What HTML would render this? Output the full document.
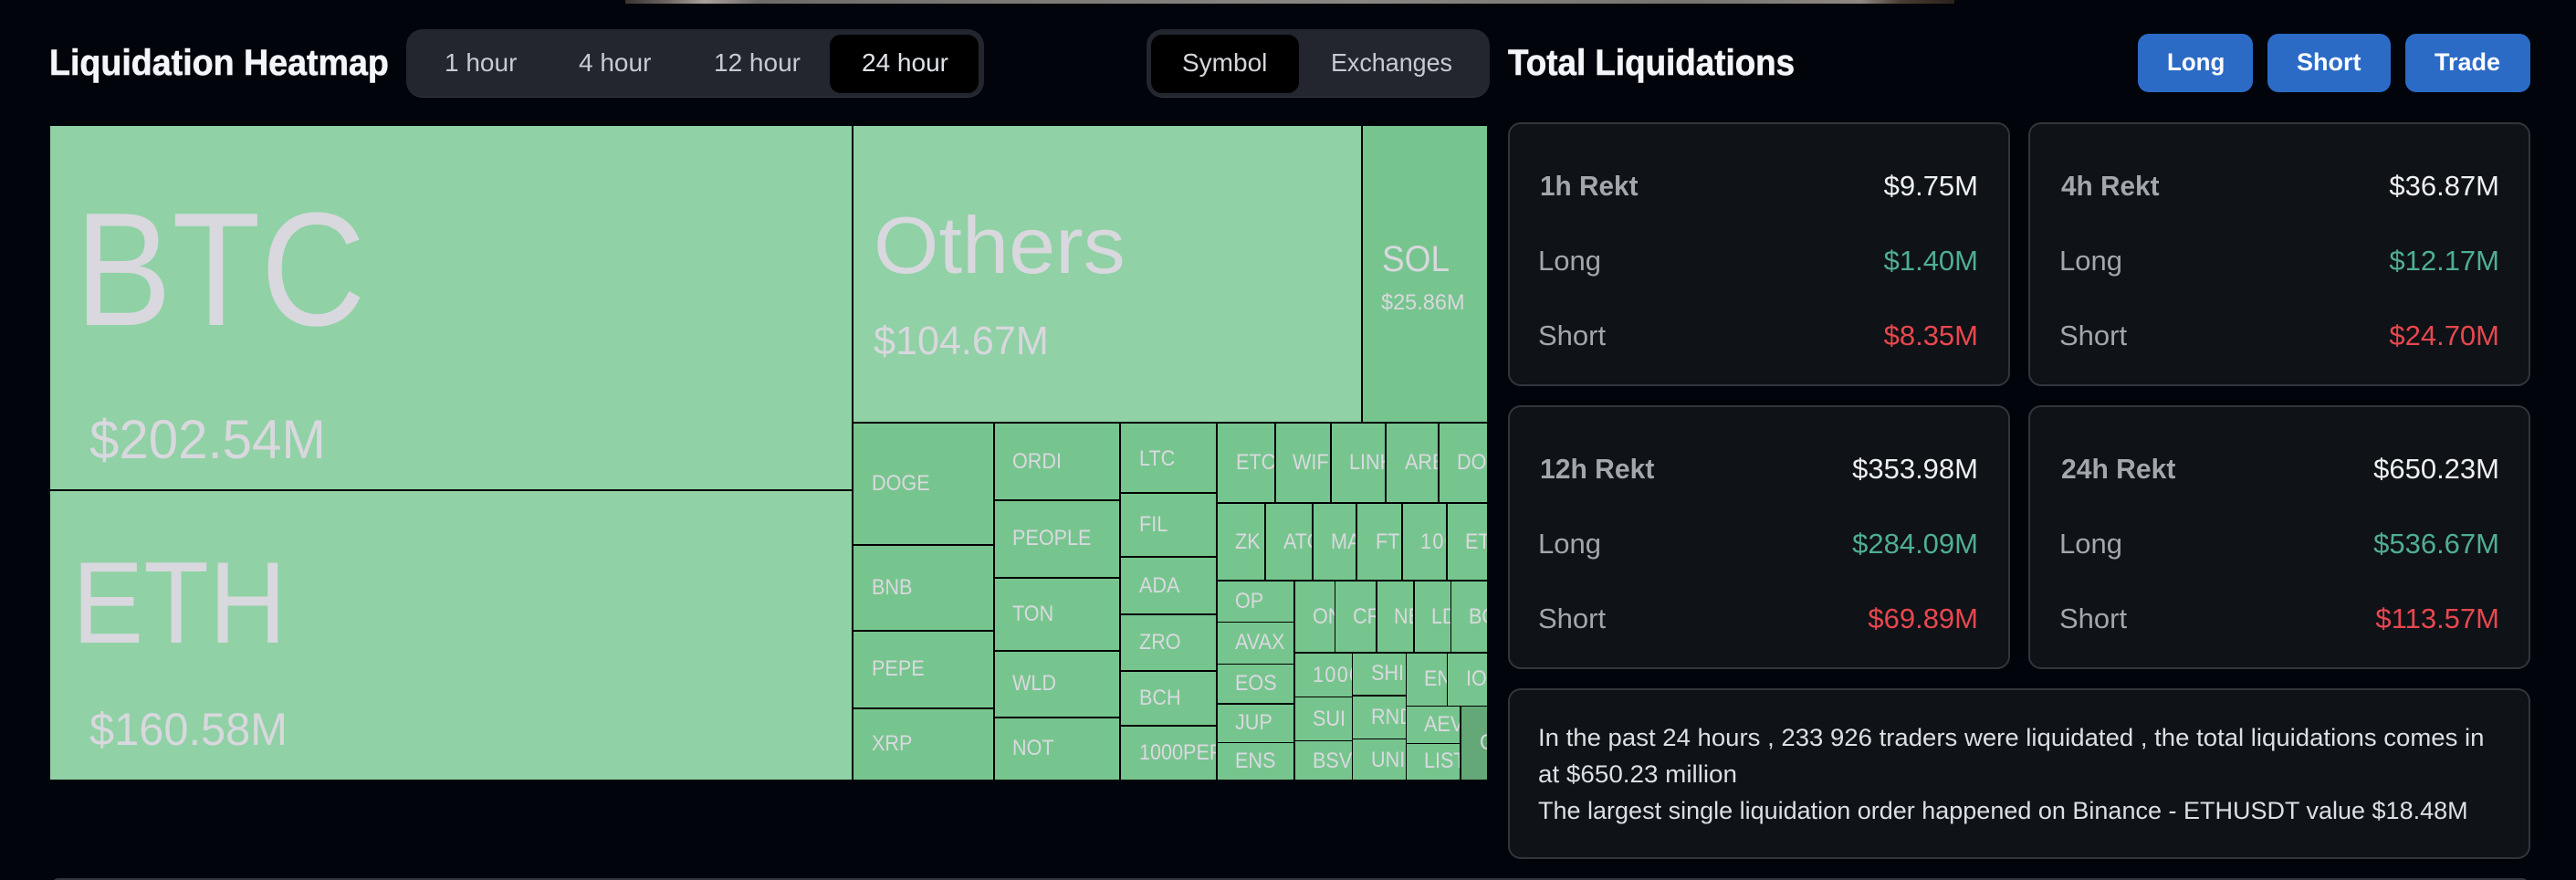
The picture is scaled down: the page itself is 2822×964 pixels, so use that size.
<!DOCTYPE html>
<html lang="en">
<head>
<meta charset="utf-8">
<title>Liquidation Heatmap</title>
<style>
html,body{margin:0;padding:0;width:2822px;height:964px;overflow:hidden;background:#01040b}
body{position:relative;font-family:"Liberation Sans",sans-serif}
div,span,i,b{position:absolute;display:block;white-space:nowrap;font-style:normal}
.t{line-height:1;transform-origin:0 0}
.b{font-weight:700}
.w{color:#f3f5fa}
.h{-webkit-text-stroke:.6px #f3f5fa}
.tab{font-size:28px;top:55px;color:#c6cad3}
.grp{top:32px;height:75px;background:#23262e;border-bottom:1px solid #34373e;border-radius:18px;box-sizing:border-box}
.act{top:38px;height:64px;background:#000;border-radius:12px}
.btn{top:37px;height:64px;background:#2b6bc6;border-radius:12px}
.bt{font-size:27px;top:54.6px;color:#fff;font-weight:700}
.card{background:#0f1216;border:2px solid #32363c;border-radius:14px;box-sizing:border-box}
.cl{font-size:31px;line-height:1;color:#a3a6ac;transform-origin:0 0}
.cv{font-size:31px;line-height:1;color:#eef0f3}
.g{color:#4fae94}
.r{color:#e8474f}
.map{left:55px;top:138px;width:1574px;height:716px;background:#000}
.c{background:#77c58e;overflow:hidden}
.c i{font-size:24px;line-height:24px;color:#d9d9df;transform:translateY(1px) scaleX(.9);transform-origin:0 0}
.big{background:#90d1a5}
.lab{color:#d8d8de;line-height:1;transform-origin:0 0}
.para{font-size:27px;line-height:1;color:#dcdfe3;transform-origin:0 0}
</style>
</head>
<body>
<div style="left:685px;top:0;width:1456px;height:4px;background:linear-gradient(90deg,#3a3532 0,#6a6460 3%,#a8a29c 6%,#6f6b68 10%,#7d7a76 30%,#8a8783 55%,#77736f 80%,#8d8882 93%,#4a3c30 96%,#2a221c 100%)"></div>

<span class="t b w h" style="left:54px;top:49px;font-size:40px;transform:scaleX(.94)">Liquidation Heatmap</span>
<div class="grp" style="left:445px;width:633px"></div>
<div class="act" style="left:909px;width:163px"></div>
<span class="t tab" style="left:487px">1 hour</span>
<span class="t tab" style="left:634px">4 hour</span>
<span class="t tab" style="left:782px">12 hour</span>
<span class="t tab" style="left:944px;color:#e0e3ea">24 hour</span>

<div class="grp" style="left:1256px;width:376px"></div>
<div class="act" style="left:1261px;width:162px"></div>
<span class="t tab" style="left:1295px;color:#d4d6dc">Symbol</span>
<span class="t tab" style="left:1458px;transform:scaleX(.96)">Exchanges</span>

<span class="t b w h" style="left:1652px;top:49px;font-size:40px;transform:scaleX(.92)">Total Liquidations</span>
<div class="btn" style="left:2342px;width:126px"></div>
<div class="btn" style="left:2484px;width:135px"></div>
<div class="btn" style="left:2635px;width:137px"></div>
<span class="t bt" style="left:2374px;transform:scaleX(.96)">Long</span>
<span class="t bt" style="left:2516px">Short</span>
<span class="t bt" style="left:2667px">Trade</span>

<div class="map"></div>
<div class="big" style="left:55px;top:138px;width:878px;height:398px"></div>
<div class="big" style="left:55px;top:538px;width:878px;height:316px"></div>
<div class="big" style="left:935px;top:138px;width:556px;height:324px"></div>
<div class="c" style="left:1493px;top:138px;width:136px;height:324px"></div>

<span class="lab" style="left:82px;top:207px;font-size:177px;transform:scaleX(.9)">BTC</span>
<span class="lab" style="left:98px;top:452px;font-size:60px;transform:scaleX(.97)">$202.54M</span>
<span class="lab" style="left:79px;top:596.5px;font-size:127px;transform:scaleX(.924)">ETH</span>
<span class="lab" style="left:98px;top:773.7px;font-size:50px;transform:scaleX(.975)">$160.58M</span>
<span class="lab" style="left:957px;top:224.5px;font-size:88px;transform:scaleX(1.044)">Others</span>
<span class="lab" style="left:957px;top:351.8px;font-size:44px;transform:scaleX(.98)">$104.67M</span>
<span class="lab" style="left:1514px;top:264px;font-size:40px;transform:scaleX(.925)">SOL</span>
<span class="lab" style="left:1513px;top:320px;font-size:24px;transform:scaleX(.98)">$25.86M</span>

<div class="c" style="left:935px;top:464px;width:153px;height:132px"><i style="left:20px;top:53px">DOGE</i></div>
<div class="c" style="left:935px;top:598px;width:153px;height:92px"><i style="left:20px;top:33px">BNB</i></div>
<div class="c" style="left:935px;top:692px;width:153px;height:83px"><i style="left:20px;top:28px">PEPE</i></div>
<div class="c" style="left:935px;top:777px;width:153px;height:77px"><i style="left:20px;top:25px">XRP</i></div>

<div class="c" style="left:1090px;top:464px;width:136px;height:83px"><i style="left:19px;top:29px">ORDI</i></div>
<div class="c" style="left:1090px;top:549px;width:136px;height:83px"><i style="left:19px;top:28px">PEOPLE</i></div>
<div class="c" style="left:1090px;top:634px;width:136px;height:78px"><i style="left:19px;top:26px">TON</i></div>
<div class="c" style="left:1090px;top:714px;width:136px;height:71px"><i style="left:19px;top:22px">WLD</i></div>
<div class="c" style="left:1090px;top:787px;width:136px;height:67px"><i style="left:19px;top:20px">NOT</i></div>

<div class="c" style="left:1228px;top:464px;width:104px;height:75px"><i style="left:20px;top:26px">LTC</i></div>
<div class="c" style="left:1228px;top:541px;width:104px;height:68px"><i style="left:20px;top:21px">FIL</i></div>
<div class="c" style="left:1228px;top:611px;width:104px;height:61px"><i style="left:20px;top:18px">ADA</i></div>
<div class="c" style="left:1228px;top:674px;width:104px;height:60px"><i style="left:20px;top:17px">ZRO</i></div>
<div class="c" style="left:1228px;top:736px;width:104px;height:58px"><i style="left:20px;top:16px">BCH</i></div>
<div class="c" style="left:1228px;top:796px;width:104px;height:58px"><i style="left:20px;top:16px">1000PEPE</i></div>

<div class="c" style="left:1334px;top:464px;width:62px;height:86px"><i style="left:20px;top:30px">ETC</i></div>
<div class="c" style="left:1398px;top:464px;width:59px;height:86px"><i style="left:18px;top:30px">WIF</i></div>
<div class="c" style="left:1459px;top:464px;width:58px;height:86px"><i style="left:19px;top:30px">LINK</i></div>
<div class="c" style="left:1519px;top:464px;width:56px;height:86px"><i style="left:20px;top:30px">ARB</i></div>
<div class="c" style="left:1577px;top:464px;width:52px;height:86px"><i style="left:19px;top:30px">DOT</i></div>

<div class="c" style="left:1334px;top:552px;width:51px;height:83px"><i style="left:19px;top:29px">ZK</i></div>
<div class="c" style="left:1387px;top:552px;width:50px;height:83px"><i style="left:19px;top:29px">ATOM</i></div>
<div class="c" style="left:1439px;top:552px;width:46px;height:83px"><i style="left:19px;top:29px">MANA</i></div>
<div class="c" style="left:1487px;top:552px;width:48px;height:83px"><i style="left:20px;top:29px">FTM</i></div>
<div class="c" style="left:1537px;top:552px;width:47px;height:83px"><i style="left:19px;top:29px;letter-spacing:1.5px">1000</i></div>
<div class="c" style="left:1586px;top:552px;width:43px;height:83px"><i style="left:19px;top:29px">ETHFI</i></div>

<div class="c" style="left:1334px;top:637px;width:83px;height:44px"><i style="left:19px;top:9px">OP</i></div>
<div class="c" style="left:1334px;top:682px;width:83px;height:45px"><i style="left:19px;top:9px">AVAX</i></div>
<div class="c" style="left:1334px;top:728px;width:83px;height:42px"><i style="left:19px;top:8px">EOS</i></div>
<div class="c" style="left:1334px;top:772px;width:83px;height:41px"><i style="left:19px;top:7px">JUP</i></div>
<div class="c" style="left:1334px;top:814px;width:83px;height:40px"><i style="left:19px;top:7px">ENS</i></div>

<div class="c" style="left:1419px;top:637px;width:43px;height:77px"><i style="left:19px;top:26px">ONDO</i></div>
<div class="c" style="left:1463px;top:637px;width:44px;height:77px"><i style="left:19px;top:26px">CRV</i></div>
<div class="c" style="left:1509px;top:637px;width:39px;height:77px"><i style="left:18px;top:26px">NEAR</i></div>
<div class="c" style="left:1550px;top:637px;width:39px;height:77px"><i style="left:18px;top:26px">LDO</i></div>
<div class="c" style="left:1590px;top:637px;width:39px;height:77px"><i style="left:19px;top:26px">BOME</i></div>

<div class="c" style="left:1419px;top:716px;width:62px;height:47px"><i style="left:19px;top:11px;letter-spacing:1.5px">1000</i></div>
<div class="c" style="left:1419px;top:764px;width:62px;height:47px"><i style="left:19px;top:11px">SUI</i></div>
<div class="c" style="left:1419px;top:812px;width:62px;height:42px"><i style="left:19px;top:9px">BSV</i></div>

<div class="c" style="left:1482px;top:716px;width:58px;height:45px"><i style="left:20px;top:9px">SHIB</i></div>
<div class="c" style="left:1482px;top:763px;width:58px;height:46px"><i style="left:20px;top:10px">RNDR</i></div>
<div class="c" style="left:1482px;top:810px;width:58px;height:44px"><i style="left:20px;top:10px">UNI</i></div>

<div class="c" style="left:1541px;top:716px;width:44px;height:57px"><i style="left:19px;top:15px">ENA</i></div>
<div class="c" style="left:1586px;top:716px;width:43px;height:57px"><i style="left:20px;top:15px">IO</i></div>
<div class="c" style="left:1541px;top:774px;width:58px;height:40px"><i style="left:19px;top:7px">AEVO</i></div>
<div class="c" style="left:1541px;top:815px;width:58px;height:39px"><i style="left:19px;top:6px">LISTA</i></div>
<div class="c" style="left:1601px;top:774px;width:28px;height:80px;background:#64a877"><i style="left:20px;top:27px">G</i></div>

<div class="card" style="left:1652px;top:134px;width:550px;height:289px"></div>
<div class="card" style="left:2222px;top:134px;width:550px;height:289px"></div>
<div class="card" style="left:1652px;top:444px;width:550px;height:289px"></div>
<div class="card" style="left:2222px;top:444px;width:550px;height:289px"></div>
<div class="card" style="left:1652px;top:754px;width:1120px;height:187px"></div>
<div style="left:57px;top:962px;width:2713px;height:14px;background:#0f1216;border:2px solid #32363c;border-radius:14px;box-sizing:border-box"></div>

<span class="cl b" style="left:1687px;top:188px;transform:scaleX(.96)">1h Rekt</span>
<span class="cv" style="right:655px;top:188px">$9.75M</span>
<span class="cl" style="left:1685px;top:270px">Long</span>
<span class="cv g" style="right:655px;top:270px">$1.40M</span>
<span class="cl" style="left:1685px;top:352px">Short</span>
<span class="cv r" style="right:655px;top:352px">$8.35M</span>

<span class="cl b" style="left:2258px;top:188px;transform:scaleX(.96)">4h Rekt</span>
<span class="cv" style="right:84px;top:188px">$36.87M</span>
<span class="cl" style="left:2256px;top:270px">Long</span>
<span class="cv g" style="right:84px;top:270px">$12.17M</span>
<span class="cl" style="left:2256px;top:352px">Short</span>
<span class="cv r" style="right:84px;top:352px">$24.70M</span>

<span class="cl b" style="left:1687px;top:498px;transform:scaleX(.97)">12h Rekt</span>
<span class="cv" style="right:655px;top:498px">$353.98M</span>
<span class="cl" style="left:1685px;top:580px">Long</span>
<span class="cv g" style="right:655px;top:580px">$284.09M</span>
<span class="cl" style="left:1685px;top:662px">Short</span>
<span class="cv r" style="right:655px;top:662px">$69.89M</span>

<span class="cl b" style="left:2258px;top:498px;transform:scaleX(.97)">24h Rekt</span>
<span class="cv" style="right:84px;top:498px">$650.23M</span>
<span class="cl" style="left:2256px;top:580px">Long</span>
<span class="cv g" style="right:84px;top:580px">$536.67M</span>
<span class="cl" style="left:2256px;top:662px">Short</span>
<span class="cv r" style="right:84px;top:662px">$113.57M</span>

<span class="para" style="left:1685px;top:795px;transform:scaleX(1.02)">In the past 24 hours , 233 926 traders were liquidated , the total liquidations comes in</span>
<span class="para" style="left:1685px;top:835px;transform:scaleX(1.03)">at $650.23 million</span>
<span class="para" style="left:1685px;top:874.5px;transform:scaleX(1)">The largest single liquidation order happened on Binance - ETHUSDT value $18.48M</span>
</body>
</html>
